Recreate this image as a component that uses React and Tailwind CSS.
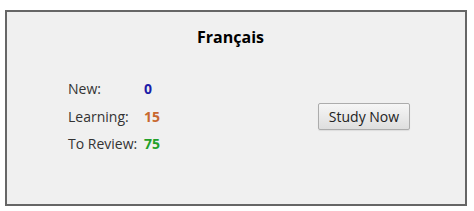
export default function App() {
  const rows = [
    { label: 'New:', value: '0', color: 'text-[#1c1ca8]' },
    { label: 'Learning:', value: '15', color: 'text-[#c8682e]' },
    { label: 'To Review:', value: '75', color: 'text-[#22a028]' },
  ]

  return (
    <div
      className="w-[474px] h-[211px] bg-white pt-[10px] pl-[5px]"
      style={{ fontFamily: '"Open Sans", "Noto Sans", sans-serif' }}
    >
      <div className="w-[462px] h-[196px] bg-[#f0f0f0] border-2 border-[#666666] flex flex-col">
        <div className="text-center font-bold text-[16px] text-black mt-[15px] leading-[20px] pr-[11px]">
          Français
        </div>

        <div className="flex items-center mt-[28px]">
          <div className="ml-[61px] flex flex-col">
            {rows.map((r) => (
              <div key={r.label} className="flex items-center h-[27.5px] text-[14px]">
                <span className="w-[76px] text-[#333333]">{r.label}</span>
                <span className={`font-bold ${r.color}`}>{r.value}</span>
              </div>
            ))}
          </div>

          <button className="ml-auto mr-[55px] w-[92px] h-[27px] text-[14px] text-[#222222] border border-[#acacac] rounded-[2px] bg-gradient-to-b from-[#f6f6f6] to-[#dedede] shadow-[0_1px_1px_rgba(0,0,0,0.08)]">
            Study Now
          </button>
        </div>
      </div>
    </div>
  )
}
